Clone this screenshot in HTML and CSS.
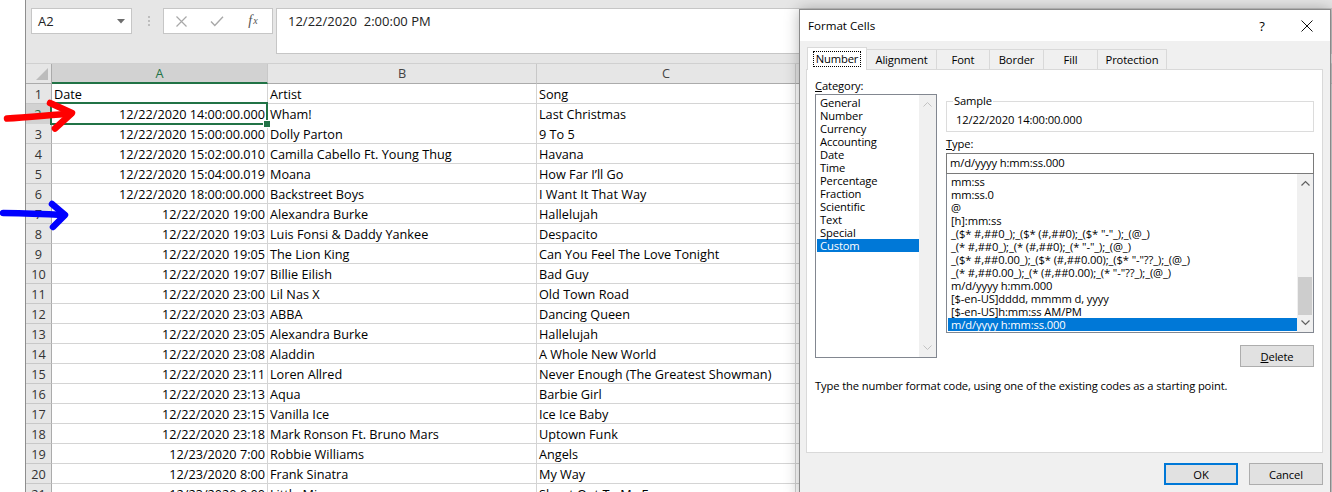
FILE: index.html
```html
<!DOCTYPE html>
<html>
<head>
<meta charset="utf-8">
<link rel="stylesheet" href="styles.css">
</head>
<body>
<div class="screen">
  <div class="strip"></div>
  <div class="excel">
    <div class="fbar">
      <div class="namebox"><span>A2</span><svg width="8" height="5" viewBox="0 0 8 5"><path d="M0 0h8L4 4.5z" fill="#6d6d6d"/></svg></div>
      <div class="sep"><i></i><i></i><i></i></div>
      <div class="fbtns">
        <span class="slot"><svg width="11" height="11" viewBox="0 0 11 11"><path d="M0.5 0.5L10.5 10.5M10.5 0.5L0.5 10.5" stroke="#a8a8a8" stroke-width="1.2" fill="none"/></svg></span>
        <span class="slot"><svg width="14" height="11" viewBox="0 0 14 11"><path d="M1 5.5L4.8 9.5L13 0.8" stroke="#a8a8a8" stroke-width="1.4" fill="none"/></svg></span>
        <span class="slot fx"><i>f</i><sub>x</sub></span>
      </div>
      <div class="finput">12/22/2020&nbsp; 2:00:00 PM</div>
    </div>
    <div class="sheet">
      <div class="row hdr">
        <div class="c corner"><svg width="12" height="12" viewBox="0 0 12 12"><path d="M12 0V12H0z" fill="#bcbcbc"/></svg></div>
        <div class="c sel">A</div>
        <div class="c">B</div>
        <div class="c">C</div>
        <div class="c"></div>
      </div>
      <div class="row"><div class="c rh">1</div><div class="c">Date</div><div class="c">Artist</div><div class="c">Song</div><div class="c"></div></div>
      <div class="row"><div class="c rh rsel">2</div><div class="c r active">12/22/2020 14:00:00.000</div><div class="c">Wham!</div><div class="c">Last Christmas</div><div class="c"></div></div>
      <div class="row"><div class="c rh">3</div><div class="c r">12/22/2020 15:00:00.000</div><div class="c">Dolly Parton</div><div class="c">9 To 5</div><div class="c"></div></div>
      <div class="row"><div class="c rh">4</div><div class="c r">12/22/2020 15:02:00.010</div><div class="c">Camilla Cabello Ft. Young Thug</div><div class="c">Havana</div><div class="c"></div></div>
      <div class="row"><div class="c rh">5</div><div class="c r">12/22/2020 15:04:00.019</div><div class="c">Moana</div><div class="c">How Far I’ll Go</div><div class="c"></div></div>
      <div class="row"><div class="c rh">6</div><div class="c r">12/22/2020 18:00:00.000</div><div class="c">Backstreet Boys</div><div class="c">I Want It That Way</div><div class="c"></div></div>
      <div class="row"><div class="c rh">7</div><div class="c r">12/22/2020 19:00</div><div class="c">Alexandra Burke</div><div class="c">Hallelujah</div><div class="c"></div></div>
      <div class="row"><div class="c rh">8</div><div class="c r">12/22/2020 19:03</div><div class="c">Luis Fonsi &amp; Daddy Yankee</div><div class="c">Despacito</div><div class="c"></div></div>
      <div class="row"><div class="c rh">9</div><div class="c r">12/22/2020 19:05</div><div class="c">The Lion King</div><div class="c">Can You Feel The Love Tonight</div><div class="c"></div></div>
      <div class="row"><div class="c rh">10</div><div class="c r">12/22/2020 19:07</div><div class="c">Billie Eilish</div><div class="c">Bad Guy</div><div class="c"></div></div>
      <div class="row"><div class="c rh">11</div><div class="c r">12/22/2020 23:00</div><div class="c">Lil Nas X</div><div class="c">Old Town Road</div><div class="c"></div></div>
      <div class="row"><div class="c rh">12</div><div class="c r">12/22/2020 23:03</div><div class="c">ABBA</div><div class="c">Dancing Queen</div><div class="c"></div></div>
      <div class="row"><div class="c rh">13</div><div class="c r">12/22/2020 23:05</div><div class="c">Alexandra Burke</div><div class="c">Hallelujah</div><div class="c"></div></div>
      <div class="row"><div class="c rh">14</div><div class="c r">12/22/2020 23:08</div><div class="c">Aladdin</div><div class="c">A Whole New World</div><div class="c"></div></div>
      <div class="row"><div class="c rh">15</div><div class="c r">12/22/2020 23:11</div><div class="c">Loren Allred</div><div class="c">Never Enough (The Greatest Showman)</div><div class="c"></div></div>
      <div class="row"><div class="c rh">16</div><div class="c r">12/22/2020 23:13</div><div class="c">Aqua</div><div class="c">Barbie Girl</div><div class="c"></div></div>
      <div class="row"><div class="c rh">17</div><div class="c r">12/22/2020 23:15</div><div class="c">Vanilla Ice</div><div class="c">Ice Ice Baby</div><div class="c"></div></div>
      <div class="row"><div class="c rh">18</div><div class="c r">12/22/2020 23:18</div><div class="c">Mark Ronson Ft. Bruno Mars</div><div class="c">Uptown Funk</div><div class="c"></div></div>
      <div class="row"><div class="c rh">19</div><div class="c r">12/23/2020 7:00</div><div class="c">Robbie Williams</div><div class="c">Angels</div><div class="c"></div></div>
      <div class="row"><div class="c rh">20</div><div class="c r">12/23/2020 8:00</div><div class="c">Frank Sinatra</div><div class="c">My Way</div><div class="c"></div></div>
      <div class="row"><div class="c rh">21</div><div class="c r">12/23/2020 9:00</div><div class="c">Little Mix</div><div class="c">Shout Out To My Ex</div><div class="c"></div></div>
    </div>
  </div>

  <svg class="arrows" width="100" height="240" viewBox="0 0 100 240">
    <path d="M7 118.5 C 25 117.5, 45 115.5, 71 113.5" stroke="#ff0000" stroke-width="6.5" fill="none" stroke-linecap="round"/>
    <path d="M50 103 L72 113 L55 128.5" stroke="#ff0000" stroke-width="6.5" fill="none" stroke-linecap="round" stroke-linejoin="round"/>
    <path d="M3 213 C 22 213, 42 214, 64 215" stroke="#0000ff" stroke-width="6.5" fill="none" stroke-linecap="round"/>
    <path d="M52 204 L65 215 L53 227" stroke="#0000ff" stroke-width="6.5" fill="none" stroke-linecap="round" stroke-linejoin="round"/>
  </svg>

  <div class="dialog">
    <div class="titlebar">
      <span class="title">Format Cells</span>
      <span class="help">?</span>
      <svg class="close" width="12" height="12" viewBox="0 0 12 12"><path d="M0.5 0.5L11.5 11.5M11.5 0.5L0.5 11.5" stroke="#111" stroke-width="1" fill="none"/></svg>
    </div>
    <div class="dbody">
      <div class="tabs">
        <div class="tab on"><span class="focus">Number</span></div>
        <div class="tab w70">Alignment</div>
        <div class="tab w53">Font</div>
        <div class="tab w54">Border</div>
        <div class="tab w54">Fill</div>
        <div class="tab w69">Protection</div>
      </div>
      <div class="panel">
        <div class="cols">
          <div class="leftcol">
            <div class="lbl"><u>C</u>ategory:</div>
            <div class="catlist">
              <div class="items">
                <div>General</div><div>Number</div><div>Currency</div><div>Accounting</div><div>Date</div><div>Time</div><div>Percentage</div><div>Fraction</div><div>Scientific</div><div>Text</div><div>Special</div><div class="hl">Custom</div>
              </div>
              <div class="sbar dis">
                <svg width="9" height="6" viewBox="0 0 9 6"><path d="M0.5 5.5L4.5 1.5L8.5 5.5" stroke="#c2c2c2" fill="none"/></svg>
                <svg width="9" height="6" viewBox="0 0 9 6"><path d="M0.5 0.5L4.5 4.5L8.5 0.5" stroke="#c2c2c2" fill="none"/></svg>
              </div>
            </div>
          </div>
          <div class="rightcol">
            <fieldset class="sample">
              <legend>Sample</legend>
              <div class="sampletxt">12/22/2020 14:00:00.000</div>
            </fieldset>
            <div class="lbl typelbl"><u>T</u>ype:</div>
            <div class="typein">m/d/yyyy h:mm:ss.000</div>
            <div class="typelist">
              <div class="items">
                <div>mm:ss</div>
                <div>mm:ss.0</div>
                <div>@</div>
                <div>[h]:mm:ss</div>
                <div>_($* #,##0_);_($* (#,##0);_($* "-"_);_(@_)</div>
                <div>_(* #,##0_);_(* (#,##0);_(* "-"_);_(@_)</div>
                <div>_($* #,##0.00_);_($* (#,##0.00);_($* "-"??_);_(@_)</div>
                <div>_(* #,##0.00_);_(* (#,##0.00);_(* "-"??_);_(@_)</div>
                <div>m/d/yyyy h:mm.000</div>
                <div>[$-en-US]dddd, mmmm d, yyyy</div>
                <div>[$-en-US]h:mm:ss AM/PM</div>
                <div class="hl">m/d/yyyy h:mm:ss.000</div>
              </div>
              <div class="sbar">
                <svg class="up" width="9" height="6" viewBox="0 0 9 6"><path d="M0.5 5.5L4.5 1.5L8.5 5.5" stroke="#606060" stroke-width="1.2" fill="none"/></svg>
                <div class="thumb"></div>
                <svg class="down" width="9" height="6" viewBox="0 0 9 6"><path d="M0.5 0.5L4.5 4.5L8.5 0.5" stroke="#606060" stroke-width="1.2" fill="none"/></svg>
              </div>
            </div>
            <div class="btn del"><u>D</u>elete</div>
          </div>
        </div>
        <div class="desc">Type the number format code, using one of the existing codes as a starting point.</div>
      </div>
      <div class="footer">
        <div class="btn ok">OK</div>
        <div class="btn cancel">Cancel</div>
      </div>
    </div>
  </div>
</div>
</body>
</html>
```
FILE: styles.css
```css
* { box-sizing: border-box; }
html, body { margin: 0; padding: 0; overflow: hidden; background: #fff; }
.screen {
  position: relative; display: flex; width: 1332px; height: 492px; overflow: hidden;
  font-family: "Open Sans", "Noto Sans", sans-serif; color: #000;
}
.strip { width: 25px; flex: none; background: #fff; }
.excel { flex: 1; min-width: 0; border-left: 1px solid #8e8e8e; background: #e6e6e6; }

/* formula bar */
.fbar {
  height: 64px; display: flex; align-items: flex-start; padding-top: 8px;
  border-bottom: 1px solid #d0d0d0; background: #e6e6e6;
}
.namebox {
  margin-left: 5px; width: 101px; height: 26px; flex: none; background: #fff;
  border: 1px solid #c6c6c6; display: flex; align-items: center; justify-content: space-between;
  padding: 0 6px; font-size: 13px; color: #222;
}
.sep { margin-left: 15px; width: 3px; height: 26px; flex: none; display: flex; flex-direction: column; justify-content: center; align-items: center; gap: 2px; }
.sep i { display: block; width: 2px; height: 2px; background: #bdbdbd; }
.fbtns {
  margin-left: 13px; width: 110px; height: 26px; flex: none; background: #fff;
  border: 1px solid #c6c6c6; display: flex; align-items: center;
}
.slot { width: 36px; display: flex; justify-content: center; align-items: center; }
.slot:first-child { width: 35px; }
.fx { font-family: "Liberation Serif", serif; font-size: 14px; color: #555; line-height: 1; }
.fx sub { font-size: 10px; font-style: italic; vertical-align: -1px; margin-left: 1px; }
.finput {
  margin-left: 3px; flex: 1; height: 46px; background: #fff; border: 1px solid #c6c6c6;
  padding: 3px 11px; font-size: 13px; line-height: 18px; color: #222; white-space: nowrap;
}

/* sheet */
.row { display: grid; grid-template-columns: 26px 216px 269px 259px 1fr; height: 20px; }
.c {
  border-right: 1px solid #d4d4d4; border-bottom: 1px solid #d4d4d4; background: #fff;
  font-size: 12.7px; line-height: 19px; padding: 1px 2px 0; white-space: nowrap; overflow: hidden; color: #000;
}
.c.r { text-align: right; }
.hdr .c { background: #e6e6e6; text-align: center; color: #444; border-bottom-color: #ababab; border-right-color: #c8c8c8; padding-top: 0; }
.hdr .c.sel { background: #d2d2d2; color: #217346; border-bottom: 2px solid #217346; line-height: 18px; }
.hdr .corner { display: flex; align-items: flex-end; justify-content: flex-end; padding: 0 3px 3px 0; border-right-color: #ababab; }
.rh { background: #e6e6e6; text-align: center; color: #333; border-right-color: #ababab; border-bottom-color: #c8c8c8; padding: 1px 0 0; }
.rh.rsel { background: #d2d2d2; color: #217346; border-right: 2px solid #217346; }
.c.active { position: relative; overflow: visible; }
.c.active::after {
  content: ""; position: absolute; left: -2px; top: -2px; right: -1px; bottom: -1px;
  border: 2px solid #217346; z-index: 2;
}
.c.active::before {
  content: ""; position: absolute; right: -4px; bottom: -4px; width: 6px; height: 6px;
  background: #217346; border: 1px solid #fff; z-index: 3;
}

/* arrows */
.arrows { position: absolute; left: 0; top: 0; z-index: 5; pointer-events: none; }

/* dialog */
.dialog {
  position: absolute; left: 799px; top: 9px; width: 532px; height: 492px; z-index: 10;
  background: #f0f0f0; border: 1px solid #8a8a8a;
  box-shadow: 0 0 14px rgba(0,0,0,0.28);
  font-size: 11.2px; letter-spacing: -0.12px; color: #000;
}
.titlebar { height: 31px; background: #fff; display: flex; align-items: center; padding-left: 8px; }
.title { flex: 1; font-size: 11.6px; letter-spacing: 0; }
.help { font-size: 13px; width: 14px; text-align: center; margin-right: 32px; }
.close { margin-right: 17px; }
.dbody { padding: 6px 0 0 6px; }
.tabs { display: flex; align-items: flex-end; height: 23px; position: relative; z-index: 1; margin-left: 1px; }
.tab {
  height: 20px; margin-bottom: 1px; border: 1px solid #d9d9d9; border-bottom: none;
  display: flex; align-items: center; justify-content: center; margin-left: -1px; background: #f0f0f0;
}
.tab.on { height: 23px; margin-bottom: 0; width: 60px; margin-left: 0; background: #fff; position: relative; z-index: 2; padding-bottom: 1px; }
.focus { border: 1px dotted #000; padding: 0 2px; line-height: 14px; }
.w70 { width: 71px; } .w53 { width: 54px; } .w54 { width: 55px; } .w69 { width: 70px; }
.panel {
  margin-top: -1px; width: 517px; height: 384px; background: #fff; border: 1px solid #d9d9d9;
  padding: 8px 8px 0 8px;
}
.cols { display: flex; align-items: flex-start; gap: 9px; }
.leftcol { width: 122px; flex: none; }
.lbl { line-height: 16px; height: 16px; }
.catlist { height: 264px; border: 1px solid #828790; display: flex; background: #fff; }
.items { flex: 1; padding: 1px 0 0 1px; min-width: 0; }
.items div { line-height: 13px; height: 13px; padding-left: 3px; white-space: nowrap; }
.items .hl { background: #0078d7; color: #fff; }
.catlist .sbar { width: 17px; }
.sbar { flex: none; background: #f0f0f0; display: flex; flex-direction: column; align-items: center; justify-content: space-between; padding: 6px 0; }
.rightcol { width: 368px; flex: none; padding-top: 16px; display: flex; flex-direction: column; }
.sample { margin: 0; padding: 0 0 0 8px; height: 38px; border: 1px solid #dcdcdc; min-width: 0; }
.sample legend { padding: 0 1px; margin-left: -2px; line-height: 14px; }
.sampletxt { line-height: 16px; padding-top: 4px; padding-left: 1px; }
.typelbl { margin-top: 4px; }
.typein { margin-top: 1px; height: 21px; border: 1px solid #7a7a7a; line-height: 18px; padding-left: 3px; background: #fff; }
.typelist { height: 159px; border: 1px solid #828790; border-top: none; display: flex; background: #fff; overflow: hidden; }
.typelist .items { padding-top: 1px; }
.typelist .sbar { width: 16px; padding: 6px 0 6px 0; position: relative; }
.thumb { position: absolute; left: 1px; right: 1px; top: 103px; height: 38px; background: #cdcdcd; }
.btn {
  height: 22px; width: 74px; background: #e1e1e1; border: 1px solid #adadad;
  display: flex; align-items: center; justify-content: center;
}
.del { align-self: flex-end; margin-top: 12px; }
.desc { margin-top: 11px; line-height: 16px; }
.footer { display: flex; justify-content: flex-end; gap: 11px; width: 517px; margin-top: 10px; }
.ok { border: 2px solid #0078d7; }
```
